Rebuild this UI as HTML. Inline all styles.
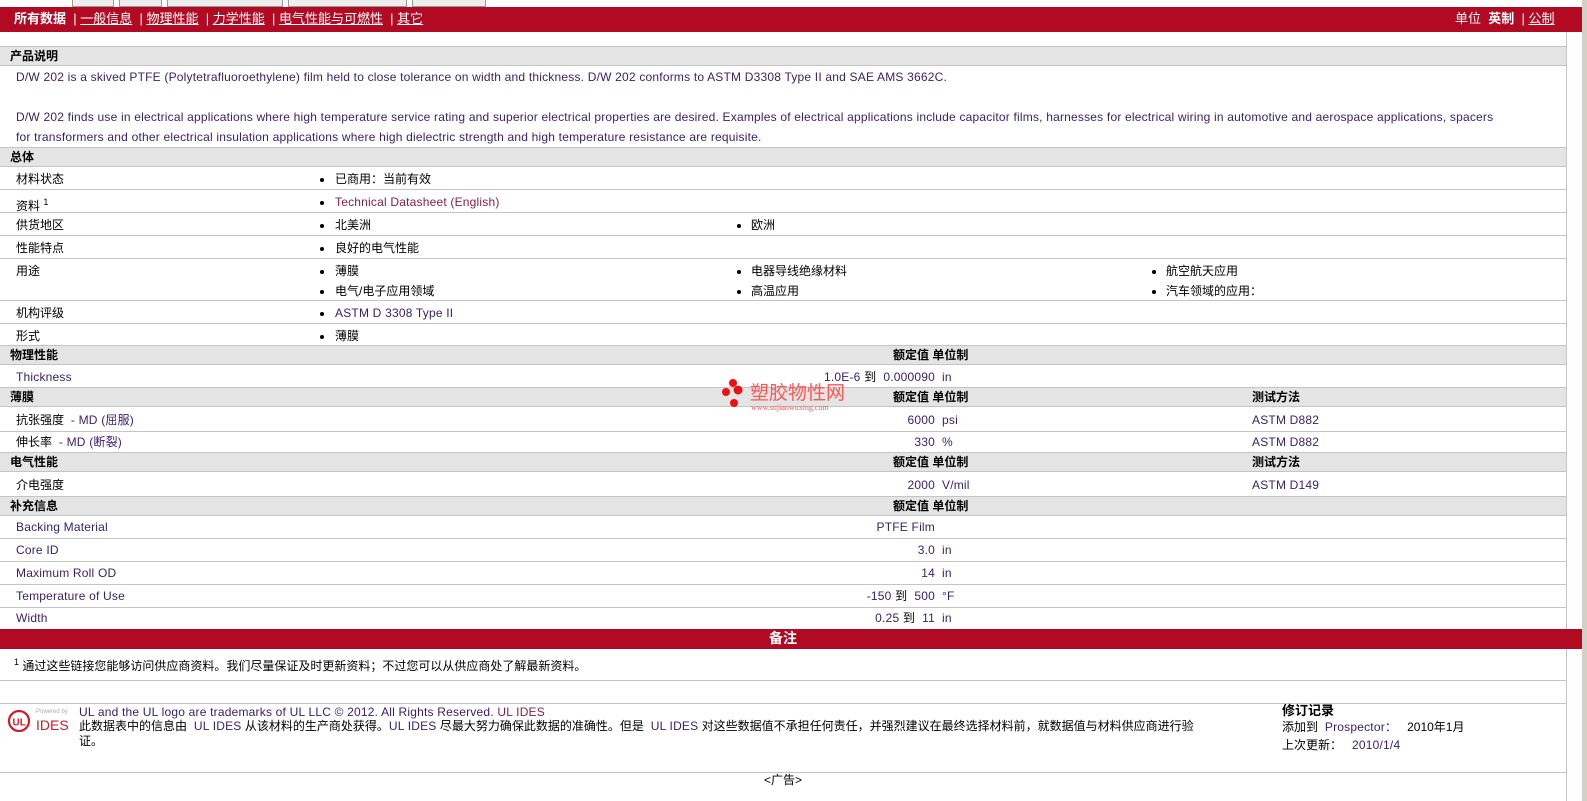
<!DOCTYPE html>
<html><head><meta charset="utf-8"><style>
*{margin:0;padding:0;box-sizing:border-box}
body{width:1587px;height:801px;background:#fff;font-family:"Liberation Sans","Noto Sans CJK SC",sans-serif;font-size:12px;color:#000;position:relative;overflow:hidden}
.a{position:absolute;white-space:nowrap;line-height:14px}
.p{color:#3a1c6e;letter-spacing:0.2px}
.red{position:absolute;left:0;width:1582px;background:#b30a24}
.hd{position:absolute;left:0;width:1566px;height:20px;background:#e4e4e4;border-top:1px solid #c4c4c4;border-bottom:1px solid #c4c4c4}
.ln{position:absolute;left:0;width:1566px;height:1px;background:#c4c4c4}
b{font-weight:bold}
.b{position:absolute;width:4px;height:4px;border-radius:50%;background:#000}
.r{text-align:right}
</style></head><body>
<div style="position:absolute;left:72px;top:0;width:42px;height:7px;border:1px solid #999;border-top:0;background:#eee"></div>
<div style="position:absolute;left:119px;top:0;width:43px;height:7px;border:1px solid #999;border-top:0;background:#eee"></div>
<div style="position:absolute;left:167px;top:0;width:116px;height:7px;border:1px solid #999;border-top:0;background:#eee"></div>
<div style="position:absolute;left:288px;top:0;width:119px;height:7px;border:1px solid #999;border-top:0;background:#eee"></div>
<div style="position:absolute;left:412px;top:0;width:74px;height:7px;border:1px solid #999;border-top:0;background:#eee"></div>
<div class="red" style="top:7px;height:25px"></div>
<div class="a" style="left:14px;top:12px;color:#fff;font-size:13px"><b>所有数据</b> &nbsp;| <u>一般信息</u> &nbsp;| <u>物理性能</u> &nbsp;| <u>力学性能</u> &nbsp;| <u>电气性能与可燃性</u> &nbsp;| <u>其它</u></div>
<div class="a" style="left:1455px;top:12px;color:#fff;font-size:13px">单位 &nbsp;<b>英制</b> &nbsp;| <u>公制</u></div>
<div style="position:absolute;left:1566px;top:32px;width:1px;height:769px;background:#c4c4c4"></div>
<div style="position:absolute;left:1582px;top:0;width:5px;height:801px;background:#d4d0c8"></div>

<div class="hd" style="top:46px"></div><div class="a" style="left:10px;top:49px"><b>产品说明</b></div>
<div class="a p" style="left:16px;top:70px">D/W 202 is a skived PTFE (Polytetrafluoroethylene) film held to close tolerance on width and thickness. D/W 202 conforms to ASTM D3308 Type II and SAE AMS 3662C.</div>
<div class="a p" style="left:16px;top:110px">D/W 202 finds use in electrical applications where high temperature service rating and superior electrical properties are desired. Examples of electrical applications include capacitor films, harnesses for electrical wiring in automotive and aerospace applications, spacers</div>
<div class="a p" style="left:16px;top:130px">for transformers and other electrical insulation applications where high dielectric strength and high temperature resistance are requisite.</div>

<div class="hd" style="top:147px"></div><div class="a" style="left:10px;top:150px"><b>总体</b></div>
<div class="a" style="left:16px;top:172px">材料状态</div><div class="b" style="left:320px;top:178px"></div><div class="a" style="left:335px;top:172px">已商用：当前有效</div>
<div class="ln" style="top:189px"></div>
<div class="a" style="left:16px;top:195px">资料 <sup style="font-size:9px">1</sup></div><div class="b" style="left:320px;top:201px"></div><div class="a p" style="left:335px;top:195px;color:#8a1f40">Technical Datasheet (English)</div>
<div class="ln" style="top:212px"></div>
<div class="a" style="left:16px;top:218px">供货地区</div><div class="b" style="left:320px;top:224px"></div><div class="a" style="left:335px;top:218px">北美洲</div><div class="b" style="left:737px;top:224px"></div><div class="a" style="left:751px;top:218px">欧洲</div>
<div class="ln" style="top:235px"></div>
<div class="a" style="left:16px;top:241px">性能特点</div><div class="b" style="left:320px;top:247px"></div><div class="a" style="left:335px;top:241px">良好的电气性能</div>
<div class="ln" style="top:258px"></div>
<div class="a" style="left:16px;top:264px">用途</div>
<div class="b" style="left:320px;top:270px"></div><div class="a" style="left:335px;top:264px">薄膜</div>
<div class="b" style="left:737px;top:270px"></div><div class="a" style="left:751px;top:264px">电器导线绝缘材料</div>
<div class="b" style="left:1152px;top:270px"></div><div class="a" style="left:1166px;top:264px">航空航天应用</div>
<div class="b" style="left:320px;top:290px"></div><div class="a" style="left:335px;top:284px">电气/电子应用领域</div>
<div class="b" style="left:737px;top:290px"></div><div class="a" style="left:751px;top:284px">高温应用</div>
<div class="b" style="left:1152px;top:290px"></div><div class="a" style="left:1166px;top:284px">汽车领域的应用：</div>
<div class="ln" style="top:300px"></div>
<div class="a" style="left:16px;top:306px">机构评级</div><div class="b" style="left:320px;top:312px"></div><div class="a p" style="left:335px;top:306px">ASTM D 3308 Type II</div>
<div class="ln" style="top:323px"></div>
<div class="a" style="left:16px;top:329px">形式</div><div class="b" style="left:320px;top:335px"></div><div class="a" style="left:335px;top:329px">薄膜</div>

<div class="hd" style="top:345px"></div><div class="a" style="left:10px;top:348px"><b>物理性能</b></div><div class="a" style="left:893px;top:348px"><b>额定值 单位制</b></div>
<div class="a p r" style="left:700px;width:235px;top:370px">1.0E-6 <span style="color:#000">到</span> &nbsp;0.000090</div><div class="a p" style="left:942px;top:370px">in</div><div class="a p" style="left:16px;top:370px">Thickness</div>

<div class="hd" style="top:387px"></div><div class="a" style="left:10px;top:390px"><b>薄膜</b></div><div class="a" style="left:893px;top:390px"><b>额定值 单位制</b></div><div class="a" style="left:1252px;top:390px"><b>测试方法</b></div>
<div class="a" style="left:16px;top:413px">抗张强度 <span class="p">&nbsp;- MD (屈服)</span></div><div class="a p r" style="left:700px;width:235px;top:413px">6000</div><div class="a p" style="left:942px;top:413px">psi</div><div class="a p" style="left:1252px;top:413px">ASTM D882</div>
<div class="ln" style="top:431px"></div>
<div class="a" style="left:16px;top:435px">伸长率 <span class="p">&nbsp;- MD (断裂)</span></div><div class="a p r" style="left:700px;width:235px;top:435px">330</div><div class="a p" style="left:942px;top:435px">%</div><div class="a p" style="left:1252px;top:435px">ASTM D882</div>

<div class="hd" style="top:452px"></div><div class="a" style="left:10px;top:455px"><b>电气性能</b></div><div class="a" style="left:893px;top:455px"><b>额定值 单位制</b></div><div class="a" style="left:1252px;top:455px"><b>测试方法</b></div>
<div class="a" style="left:16px;top:478px">介电强度</div><div class="a p r" style="left:700px;width:235px;top:478px">2000</div><div class="a p" style="left:942px;top:478px">V/mil</div><div class="a p" style="left:1252px;top:478px">ASTM D149</div>

<div class="hd" style="top:496px"></div><div class="a" style="left:10px;top:499px"><b>补充信息</b></div><div class="a" style="left:893px;top:499px"><b>额定值 单位制</b></div>
<div class="a p" style="left:16px;top:520px">Backing Material</div><div class="a p r" style="left:700px;width:235px;top:520px">PTFE Film</div>
<div class="ln" style="top:538px"></div>
<div class="a p" style="left:16px;top:543px">Core ID</div><div class="a p r" style="left:700px;width:235px;top:543px">3.0</div><div class="a p" style="left:942px;top:543px">in</div>
<div class="ln" style="top:561px"></div>
<div class="a p" style="left:16px;top:566px">Maximum Roll OD</div><div class="a p r" style="left:700px;width:235px;top:566px">14</div><div class="a p" style="left:942px;top:566px">in</div>
<div class="ln" style="top:584px"></div>
<div class="a p" style="left:16px;top:589px">Temperature of Use</div><div class="a p r" style="left:700px;width:235px;top:589px">-150 <span style="color:#000">到</span> &nbsp;500</div><div class="a p" style="left:942px;top:589px">°F</div>
<div class="ln" style="top:607px"></div>
<div class="a p" style="left:16px;top:611px">Width</div><div class="a p r" style="left:700px;width:235px;top:611px">0.25 <span style="color:#000">到</span> &nbsp;11</div><div class="a p" style="left:942px;top:611px">in</div>

<div class="red" style="top:629px;height:20px"></div><div class="a" style="left:0;width:1566px;text-align:center;top:630px;color:#fff;font-size:14px;line-height:17px"><b>备注</b></div>
<div class="a" style="left:14px;top:655px"><sup style="font-size:9px">1</sup> 通过这些链接您能够访问供应商资料。我们尽量保证及时更新资料；不过您可以从供应商处了解最新资料。</div>
<div class="ln" style="top:680px"></div>
<div class="ln" style="top:703px"></div>
<svg style="position:absolute;left:5px;top:705px" width="70" height="32"><circle cx="14" cy="16" r="10" fill="none" stroke="#d11a2a" stroke-width="2.2"/><text x="7.5" y="20.5" font-size="10" font-weight="bold" fill="#d11a2a" font-family="Liberation Sans">UL</text><text x="31" y="8" font-size="6" fill="#aaa" font-family="Liberation Sans">Powered by</text><text x="31" y="25" font-size="14" fill="#d11a2a" font-family="Liberation Sans">IDES</text></svg>
<div class="a p" style="left:79px;top:705px">UL and the UL logo are trademarks of UL LLC © 2012. All Rights Reserved. <span style="color:#8a1f40">UL IDES</span></div>
<div class="a" style="left:79px;top:719px">此数据表中的信息由 <span class="p">&nbsp;UL IDES</span> 从该材料的生产商处获得。<span class="p">UL IDES</span> 尽最大努力确保此数据的准确性。但是 <span class="p">&nbsp;UL IDES</span> 对这些数据值不承担任何责任，并强烈建议在最终选择材料前，就数据值与材料供应商进行验</div>
<div class="a" style="left:79px;top:734px">证。</div>
<div class="a" style="left:1282px;top:704px;font-size:13px"><b>修订记录</b></div>
<div class="a" style="left:1282px;top:720px">添加到 <span class="p">&nbsp;Prospector：</span> &nbsp;&nbsp;2010年1月</div>
<div class="a" style="left:1282px;top:738px">上次更新： &nbsp;&nbsp;<span class="p">2010/1/4</span></div>
<div class="ln" style="top:772px"></div>
<div class="a" style="left:0;width:1566px;text-align:center;top:773px">&lt;广告&gt;</div>
<svg style="position:absolute;left:720px;top:378px" width="140" height="36"><circle cx="13" cy="5" r="4" fill="#e11"/><circle cx="6" cy="14" r="4" fill="#e11"/><circle cx="18" cy="12" r="4.5" fill="#e11"/><circle cx="14" cy="25" r="4" fill="#e11"/><text x="30" y="21" font-size="19" fill="#f55" font-family="Noto Sans CJK SC">塑胶物性网</text><text x="31" y="32" font-size="8" fill="#f55" font-family="Liberation Serif">www.sujiaowuxing.com</text></svg>
</body></html>
